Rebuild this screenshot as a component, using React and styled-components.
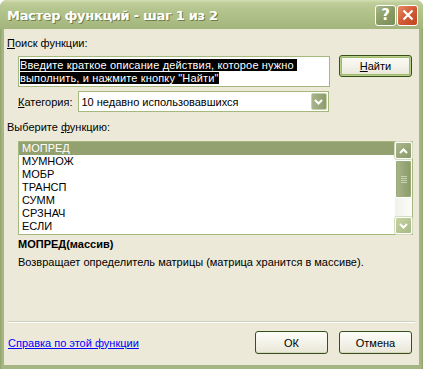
import React from "react";
import styled, { createGlobalStyle } from "styled-components";

const Global = createGlobalStyle`
  html, body { margin: 0; padding: 0; background: #fff; }
  body { font-family: "Liberation Sans", Arial, sans-serif; font-size: 11px; }
`;

const FUNCS = ["МОПРЕД", "МУМНОЖ", "МОБР", "ТРАНСП", "СУММ", "СРЗНАЧ", "ЕСЛИ"];

function Chevron({ up }) {
    return (
        <svg width="9" height="6" viewBox="0 0 9 6">
            <path d={up ? "M1 5 L4.5 1.5 L8 5" : "M1 1 L4.5 4.5 L8 1"} fill="none" stroke="#fff" strokeWidth="2" />
        </svg>
    );
}

function App() {
    return (
        <>
            <Global />
            <Window>
                <TitleBar>
                    <Title>Мастер функций - шаг 1 из 2</Title>
                    <Caps>
                        <CapButton>?</CapButton>
                        <CapButton close>
                            <svg width="12" height="12" viewBox="0 0 12 12">
                                <path d="M1.5 1.5 L10.5 10.5 M10.5 1.5 L1.5 10.5" stroke="#fff" strokeWidth="2.2" />
                            </svg>
                        </CapButton>
                    </Caps>
                </TitleBar>
                <Body>
                    <Label><u>П</u>оиск функции:</Label>
                    <SearchRow>
                        <SearchBox>
                            <Line><Sel>Введите краткое описание действия, которое нужно </Sel></Line>
                            <Line><Sel>выполнить, и нажмите кнопку "Найти"</Sel></Line>
                        </SearchBox>
                        <Button primary><u>Н</u>айти</Button>
                    </SearchRow>
                    <CategoryRow>
                        <span><u>К</u>атегория:</span>
                        <Combo>
                            <span>10 недавно использовавшихся</span>
                            <DropBtn><Chevron /></DropBtn>
                        </Combo>
                    </CategoryRow>
                    <Label spaced>Выберите <u>ф</u>ункцию:</Label>
                    <ListBox>
                        <Items>
                            {FUNCS.map((f, i) => (
                                <Item key={f} selected={i === 0}>{f}</Item>
                            ))}
                        </Items>
                        <ScrollBar>
                            <ArrowBtn><Chevron up /></ArrowBtn>
                            <Thumb>
                                <Grip /><Grip /><Grip /><Grip />
                            </Thumb>
                            <Track />
                            <ArrowBtn light><Chevron /></ArrowBtn>
                        </ScrollBar>
                    </ListBox>
                    <FuncName>МОПРЕД(массив)</FuncName>
                    <Description>Возвращает определитель матрицы (матрица хранится в массиве).</Description>
                    <Separator />
                    <BottomRow>
                        <HelpLink href="#help">Справка по этой функции</HelpLink>
                        <Buttons>
                            <Button>ОК</Button>
                            <Button>Отмена</Button>
                        </Buttons>
                    </BottomRow>
                </Body>
            </Window>
        </>
    );
}

const Window = styled.div`
    width: 423px;
    height: 369px;
    display: flex;
    flex-direction: column;
    background: linear-gradient(90deg, #8fa26b, #a6b683 2px, #a6b683 421px, #8fa26b);
    border-radius: 7px 7px 0 0;
    overflow: hidden;
`;

const TitleBar = styled.div`
    height: 29px;
    flex: none;
    display: flex;
    align-items: center;
    justify-content: space-between;
    padding: 0 5px 0 7px;
    background: linear-gradient(#d3ddb4 0px, #bfcd99 3px, #b4c48d 10px, #abbc84 20px, #a3b57c 29px);
    box-sizing: border-box;
`;

const Title = styled.span`
    font-family: "DejaVu Sans", sans-serif;
    font-weight: bold;
    font-size: 13px;
    letter-spacing: -0.3px;
    color: #fff;
    text-shadow: 1px 1px 0 #6f7f4c;
    margin-top: 2px;
`;

const Caps = styled.div`
    display: flex;
    gap: 1px;
    margin-top: 1px;
`;

const CapButton = styled.div`
    width: 21px;
    height: 21px;
    box-sizing: border-box;
    border: 1px solid #fff;
    border-radius: 3px;
    display: flex;
    align-items: center;
    justify-content: center;
    color: #fff;
    font-family: "DejaVu Sans", sans-serif;
    font-weight: bold;
    font-size: 15px;
    background: ${p => p.close
        ? "linear-gradient(135deg, #e58a6a, #d25a35 50%, #c2461f)"
        : "linear-gradient(135deg, #a9b88a, #8a9c66 50%, #7a8c57)"};
`;

const Body = styled.div`
    flex: 1;
    display: flex;
    flex-direction: column;
    background: #ece9d8;
    margin: 0 4px 4px 4px;
    padding: 8px 7px 0 3px;
    color: #000;
`;

const Label = styled.div`
    line-height: 13px;
    margin-top: ${p => p.spaced ? "9px" : "0"};
`;

const SearchRow = styled.div`
    display: flex;
    align-items: flex-start;
    margin-top: 6px;
    padding-left: 11px;
    gap: 9px;
`;

const SearchBox = styled.div`
    width: 312px;
    height: 31px;
    box-sizing: border-box;
    border: 1px solid #a5b97f;
    background: #fff;
    padding: 2px 0 0 1px;
`;

const Line = styled.div`
    line-height: 13px;
    white-space: pre;
    letter-spacing: 0.15px;
`;

const Sel = styled.span`
    background: #000;
    color: #fff;
`;

const Button = styled.button`
    width: 73px;
    height: ${p => p.primary ? "22px" : "23px"};
    margin-top: -1px;
    box-sizing: border-box;
    font-family: inherit;
    font-size: 11px;
    color: #000;
    border: 1px solid #37501b;
    border-radius: 3px;
    background: linear-gradient(#fdfdf8, #f4f3ea 50%, #e8e6d6);
    box-shadow: ${p => p.primary
        ? "inset 0 0 0 1px #b7cf8a, inset 0 0 0 2px #9fba6c"
        : "inset 0 -1px 0 #d8d5c2"};
    padding: 0;
`;

const CategoryRow = styled.div`
    display: flex;
    align-items: center;
    margin-top: 4px;
    padding-left: 11px;
    gap: 5px;
`;

const Combo = styled.div`
    width: 251px;
    height: 21px;
    box-sizing: border-box;
    border: 1px solid #a5b97f;
    background: #fff;
    display: flex;
    align-items: center;
    justify-content: space-between;
    padding: 0 1px 0 3px;
`;

const DropBtn = styled.div`
    width: 16px;
    height: 17px;
    box-sizing: border-box;
    border: 1px solid #c6d1ad;
    border-radius: 2px;
    background: linear-gradient(90deg, #a7b48a, #8e9c6c);
    display: flex;
    align-items: center;
    justify-content: center;
`;

const ListBox = styled.div`
    margin: 7px 0 0 11px;
    width: 395px;
    height: 94px;
    box-sizing: border-box;
    border: 1px solid #a5b97f;
    background: #fff;
    display: flex;
`;

const Items = styled.div`
    flex: 1;
    display: flex;
    flex-direction: column;
`;

const Item = styled.div`
    height: 13px;
    line-height: 13px;
    padding-left: 3px;
    background: ${p => p.selected ? "#93a070" : "transparent"};
    color: ${p => p.selected ? "#fff" : "#000"};
`;

const ScrollBar = styled.div`
    width: 17px;
    display: flex;
    flex-direction: column;
    background: linear-gradient(90deg, #f1f1ea, #fcfcf8);
`;

const ArrowBtn = styled.div`
    height: 17px;
    box-sizing: border-box;
    border: 1px solid #fff;
    border-radius: 2px;
    background: ${p => p.light
        ? "linear-gradient(135deg, #c6d3a2, #a7b985)"
        : "linear-gradient(135deg, #aab58c, #8a9a68)"};
    box-shadow: 0 0 0 1px #d3dcc0;
    display: flex;
    align-items: center;
    justify-content: center;
`;

const Thumb = styled.div`
    height: 38px;
    margin-top: 1px;
    box-sizing: border-box;
    border: 1px solid #fff;
    border-radius: 2px;
    box-shadow: inset 0 0 0 1px #9aab79;
    background: linear-gradient(90deg, #a9b58d, #95a475 60%, #8b9b6b);
    display: flex;
    flex-direction: column;
    align-items: center;
    justify-content: center;
    gap: 1px;
`;

const Grip = styled.div`
    width: 6px;
    height: 1px;
    background: #c9d3b1;
`;

const Track = styled.div`
    flex: 1;
`;

const FuncName = styled.div`
    margin: 3px 0 0 11px;
    font-weight: bold;
    line-height: 13px;
`;

const Description = styled.div`
    margin: 5px 0 0 11px;
    line-height: 13px;
`;

const Separator = styled.div`
    margin: 52px -3px 0 1px;
    height: 1px;
    background: #d0d0bf;
    border-bottom: 1px solid #fff;
`;

const BottomRow = styled.div`
    display: flex;
    align-items: center;
    justify-content: space-between;
    margin-top: 9px;
    padding-left: 1px;
`;

const HelpLink = styled.a`
    color: #0000ff;
    text-decoration: underline;
    line-height: 13px;
`;

const Buttons = styled.div`
    display: flex;
    gap: 11px;
`;

export default App;
